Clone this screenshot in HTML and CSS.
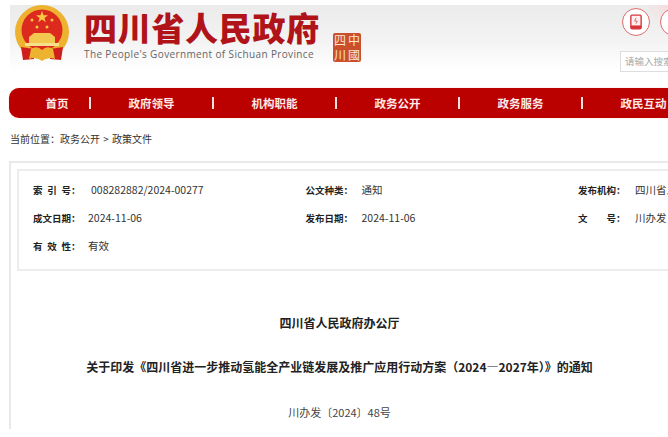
FILE: index.html
```html
<!DOCTYPE html>
<html lang="zh-CN">
  <head>
    <meta charset="UTF-8" />
    <title>四川省人民政府</title>
    <link rel="stylesheet" href="styles.css">
  </head>
  <body>
    <header class="site-head">
      <svg class="emblem" viewBox="0 0 56 62" width="56" height="62">
        <circle cx="28" cy="27" r="27" fill="#edb22f" />
        <circle cx="28" cy="25" r="20.5" fill="#dd2a1f" />
        <path d="M28 6 L29.5 10.2 L34 10.2 L30.4 12.9 L31.8 17.2 L28 14.6 L24.2 17.2 L25.6 12.9 L22 10.2 L26.5 10.2 Z" fill="#f6c945" />
        <circle cx="18" cy="15" r="1.5" fill="#f6c945" />
        <circle cx="38" cy="15" r="1.5" fill="#f6c945" />
        <circle cx="23" cy="22" r="1.5" fill="#f6c945" />
        <circle cx="33" cy="22" r="1.5" fill="#f6c945" />
        <path d="M20 28 L36 28 L41 32 L41 38 L15 38 L15 32 Z" fill="#f2c84f" />
        <rect x="11" y="38" width="34" height="3" fill="#f7e08a" />
        <path d="M7 42 L20 44 L20 54 L9 55 Z M49 42 L36 44 L36 54 L47 55 Z" fill="#cf1f1c" />
        <path d="M17 44 Q23 40 28 45 Q33 40 39 44 L41 54 Q34 51 28 56 Q22 51 15 54 Z" fill="#edb22f" />
      </svg>
      <div class="brand">
        <div class="brand-name">四川省人民政府</div>
        <div class="brand-en">The People's Government of Sichuan Province</div>
      </div>
      <div class="seal">
        <span>四</span><span>中</span><span>川</span><span>國</span>
      </div>
      <div class="head-tools">
        <div class="tool-icons">
          <span class="tool-icon">
            <svg viewBox="0 0 14 18" width="12" height="16">
              <rect x="1" y="1" width="12" height="16" rx="1.5" fill="#fdf0f0" stroke="#d8343a" stroke-width="1.6" />
              <rect x="1" y="13" width="12" height="4" fill="#d8343a" />
              <path d="M7 4 L5.5 8 L8.5 8 L7 11" fill="none" stroke="#d8343a" stroke-width=".8" />
            </svg>
          </span>
          <span class="tool-icon"></span>
        </div>
        <div class="search-box">请输入搜索</div>
      </div>
    </header>

    <nav class="main-nav">
      <a class="nav-first">首页</a><i></i>
      <a>政府领导</a><i></i>
      <a>机构职能</a><i></i>
      <a>政务公开</a><i></i>
      <a>政务服务</a><i></i>
      <a>政民互动</a>
    </nav>

    <div class="crumbs">当前位置：政务公开 &gt; 政策文件</div>

    <main class="article">
      <div class="meta">
        <div class="meta-row">
          <div class="meta-cell"><b class="sp">索引号</b><b>：</b><span class="val-wide">008282882/2024-00277</span></div>
          <div class="meta-cell"><b>公文种类</b><b>：</b><span>通知</span></div>
          <div class="meta-cell"><b>发布机构</b><b>：</b><span>四川省人民政府办公厅</span></div>
        </div>
        <div class="meta-row">
          <div class="meta-cell"><b>成文日期</b><b>：</b><span>2024-11-06</span></div>
          <div class="meta-cell"><b>发布日期</b><b>：</b><span>2024-11-06</span></div>
          <div class="meta-cell"><b class="sp">文号</b><b>：</b><span>川办发〔2024〕48号</span></div>
        </div>
        <div class="meta-row">
          <div class="meta-cell"><b class="sp">有效性</b><b>：</b><span>有效</span></div>
        </div>
      </div>
      <h2 class="doc-org">四川省人民政府办公厅</h2>
      <h1 class="doc-title">关于印发《四川省进一步推动氢能全产业链发展及推广应用行动方案（2024—2027年）》的通知</h1>
      <p class="doc-no">川办发〔2024〕48号</p>
    </main>
  </body>
</html>
```

FILE: styles.css
```css
* {
  margin: 0;
  padding: 0;
  box-sizing: border-box;
}
html, body {
  height: 437px;
  overflow: hidden;
}
body {
  font-family: "Noto Sans CJK SC", "Noto Sans", sans-serif;
  background-color: #fff;
  color: #333;
  padding-top: 5px;
}

.site-head {
  display: flex;
  align-items: flex-start;
  width: 658px;
  height: 65px;
  margin-left: 10px;
  padding-left: 4px;
  background:
    radial-gradient(circle at 100% 0, #f7dcdc, rgba(247, 220, 220, 0) 22px),
    linear-gradient(#ebebeb, #f3f3f3 55%, #fff);
}
.emblem {
  flex: none;
}
.brand {
  flex: none;
  margin-left: 14px;
  padding-top: 3px;
}
.brand-name {
  font-size: 33px;
  line-height: 38px;
  font-weight: 900;
  letter-spacing: .7px;
  color: #b01318;
}
.brand-en {
  margin-top: 1px;
  font-family: "Open Sans", sans-serif;
  font-size: 10px;
  line-height: 14px;
  letter-spacing: .37px;
  color: #666;
  white-space: nowrap;
}
.seal {
  flex: none;
  display: grid;
  grid-template-columns: 1fr 1fr;
  width: 28px;
  height: 29px;
  margin: 28px 0 0 13px;
  border-radius: 2px;
  background-color: #c9502b;
  color: #fbe3d4;
  font-size: 12px;
  line-height: 14px;
  text-align: center;
}
.head-tools {
  flex: none;
  margin-left: auto;
  width: 46px;
  padding-top: 3px;
}
.tool-icons {
  display: flex;
  gap: 10px;
}
.tool-icon {
  flex: none;
  display: flex;
  align-items: center;
  justify-content: center;
  width: 28px;
  height: 28px;
  border: 1px solid #e06a6a;
  border-radius: 50%;
  background-color: #fff;
}
.search-box {
  width: 70px;
  height: 21px;
  margin: 15px 0 0 -2px;
  padding-left: 4px;
  border: 1px solid #ddd;
  background-color: #fff;
  font-size: 9.5px;
  line-height: 19px;
  color: #aaa;
  white-space: nowrap;
}

.main-nav {
  display: flex;
  align-items: center;
  width: 800px;
  height: 30px;
  margin: 18px 0 0 9px;
  border-radius: 10px 0 0 10px;
  background-color: #bb0000;
  box-shadow: 0 0 1px #e88;
}
.main-nav a {
  flex: none;
  width: 121px;
  text-align: center;
  font-size: 11.5px;
  font-weight: 700;
  color: #fde8e8;
}
.main-nav a.nav-first {
  width: 80px;
  padding-left: 16px;
}
.main-nav i {
  flex: none;
  width: 2px;
  height: 12px;
  background-color: #fbe0e0;
}

.crumbs {
  margin: 13px 0 0 10px;
  font-size: 10px;
  line-height: 16px;
  word-spacing: 1px;
  color: #333;
}

.article {
  width: 661px;
  height: 268px;
  margin: 14px 0 0 9px;
  padding: 6px 6px 0 6px;
  border: 2px solid #e9e9e9;
  border-bottom: 0;
}
.meta {
  width: 800px;
  height: 102px;
  padding: 5px 0 0 14px;
  border: 2px solid #ececec;
}
.meta-row {
  display: flex;
  height: 28px;
  align-items: center;
}
.meta-cell {
  flex: none;
  display: flex;
  align-items: baseline;
  width: 272.5px;
  font-size: 10.5px;
  line-height: 16px;
}
.meta-cell b {
  flex: none;
  font-size: 9.5px;
  color: #222;
}
.meta-cell b.sp {
  width: 38px;
  text-align-last: justify;
}
.meta-cell span {
  margin-left: 7.5px;
  white-space: nowrap;
}
.meta-cell span.val-wide {
  margin-left: 10.5px;
}
.meta-cell:nth-child(2) span {
  margin-left: 8.5px;
}
.meta-cell:nth-child(3) span {
  margin-left: 9.5px;
}

.doc-org,
.doc-title {
  font-size: 12px;
  line-height: 18px;
  font-weight: 700;
  text-align: center;
  color: #222;
}
.doc-org {
  margin-top: 43px;
}
.doc-title {
  margin-top: 26px;
}
.doc-no {
  margin-top: 27px;
  font-size: 11px;
  line-height: 18px;
  text-align: center;
  color: #444;
}
```
